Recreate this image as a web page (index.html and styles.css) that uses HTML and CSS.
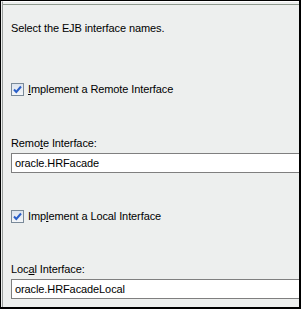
FILE: index.html
```html
<!DOCTYPE html>
<html>
<head>
<meta charset="utf-8">
<link rel="stylesheet" href="styles.css">
</head>
<body>
<div class="panel">
  <div class="inner">
    <p class="intro">Select the EJB interface names.</p>
    <label class="check check-remote">
      <span class="box"><svg width="11" height="11" viewBox="0 0 11 11"><path d="M2 5.5 L4.3 8 L9 2.5" fill="none" stroke="#2a5fc8" stroke-width="2"/></svg></span>
      <span><u>I</u>mplement a Remote Interface</span>
    </label>
    <div class="field field-remote">
      <div class="label">Remo<u>t</u>e Interface:</div>
      <div class="input">oracle.HRFacade</div>
    </div>
    <label class="check check-local">
      <span class="box"><svg width="11" height="11" viewBox="0 0 11 11"><path d="M2 5.5 L4.3 8 L9 2.5" fill="none" stroke="#2a5fc8" stroke-width="2"/></svg></span>
      <span>Imp<u>l</u>ement a Local Interface</span>
    </label>
    <div class="field field-local">
      <div class="label">Loc<u>a</u>l Interface:</div>
      <div class="input">oracle.HRFacadeLocal</div>
    </div>
  </div>
</div>
</body>
</html>
```
FILE: styles.css
```css
html, body {
  margin: 0;
  padding: 0;
}
body {
  width: 301px;
  height: 309px;
  overflow: hidden;
  font-family: "Liberation Sans", Arial, sans-serif;
  font-size: 11px;
  letter-spacing: -0.1px;
  color: #000;
}
.panel {
  box-sizing: border-box;
  width: 301px;
  height: 309px;
  border-top: 1px solid #000;
  border-left: 1px solid #000;
  border-right: 2px solid #000;
  border-bottom: 2px solid #000;
  background: #edefee;
}
.inner {
  box-sizing: border-box;
  height: 100%;
  margin-left: 1px;
  border-left: 1px solid #9a9e9c;
  border-top: 1px solid #fff;
  padding: 20px 0 0 8px;
  position: relative;
}
.inner::before {
  content: "";
  position: absolute;
  left: 0;
  right: 0;
  top: 2px;
  height: 1px;
  background: #8f9a8f;
}
.intro {
  margin: 0;
  line-height: 13px;
}
u {
  text-decoration: underline;
  text-underline-offset: 1px;
}
.check {
  display: flex;
  align-items: center;
  gap: 4px;
  line-height: 13px;
}
.check-remote {
  margin-top: 48px;
}
.check-local {
  margin-top: 37px;
}
.box {
  box-sizing: border-box;
  width: 13px;
  height: 13px;
  border: 1px solid #7a8a99;
  background: linear-gradient(#dce4ee, #f4f6f8);
  display: flex;
  align-items: center;
  justify-content: center;
}
.box svg {
  display: block;
}
.field-remote {
  margin-top: 41px;
}
.field-local {
  margin-top: 40px;
}
.label {
  line-height: 13px;
}
.input {
  box-sizing: border-box;
  margin-top: 3px;
  height: 20px;
  border: 1px solid #7f7f7f;
  border-right: none;
  background: #fff;
  padding: 0 0 0 3px;
  line-height: 18px;
}
```
